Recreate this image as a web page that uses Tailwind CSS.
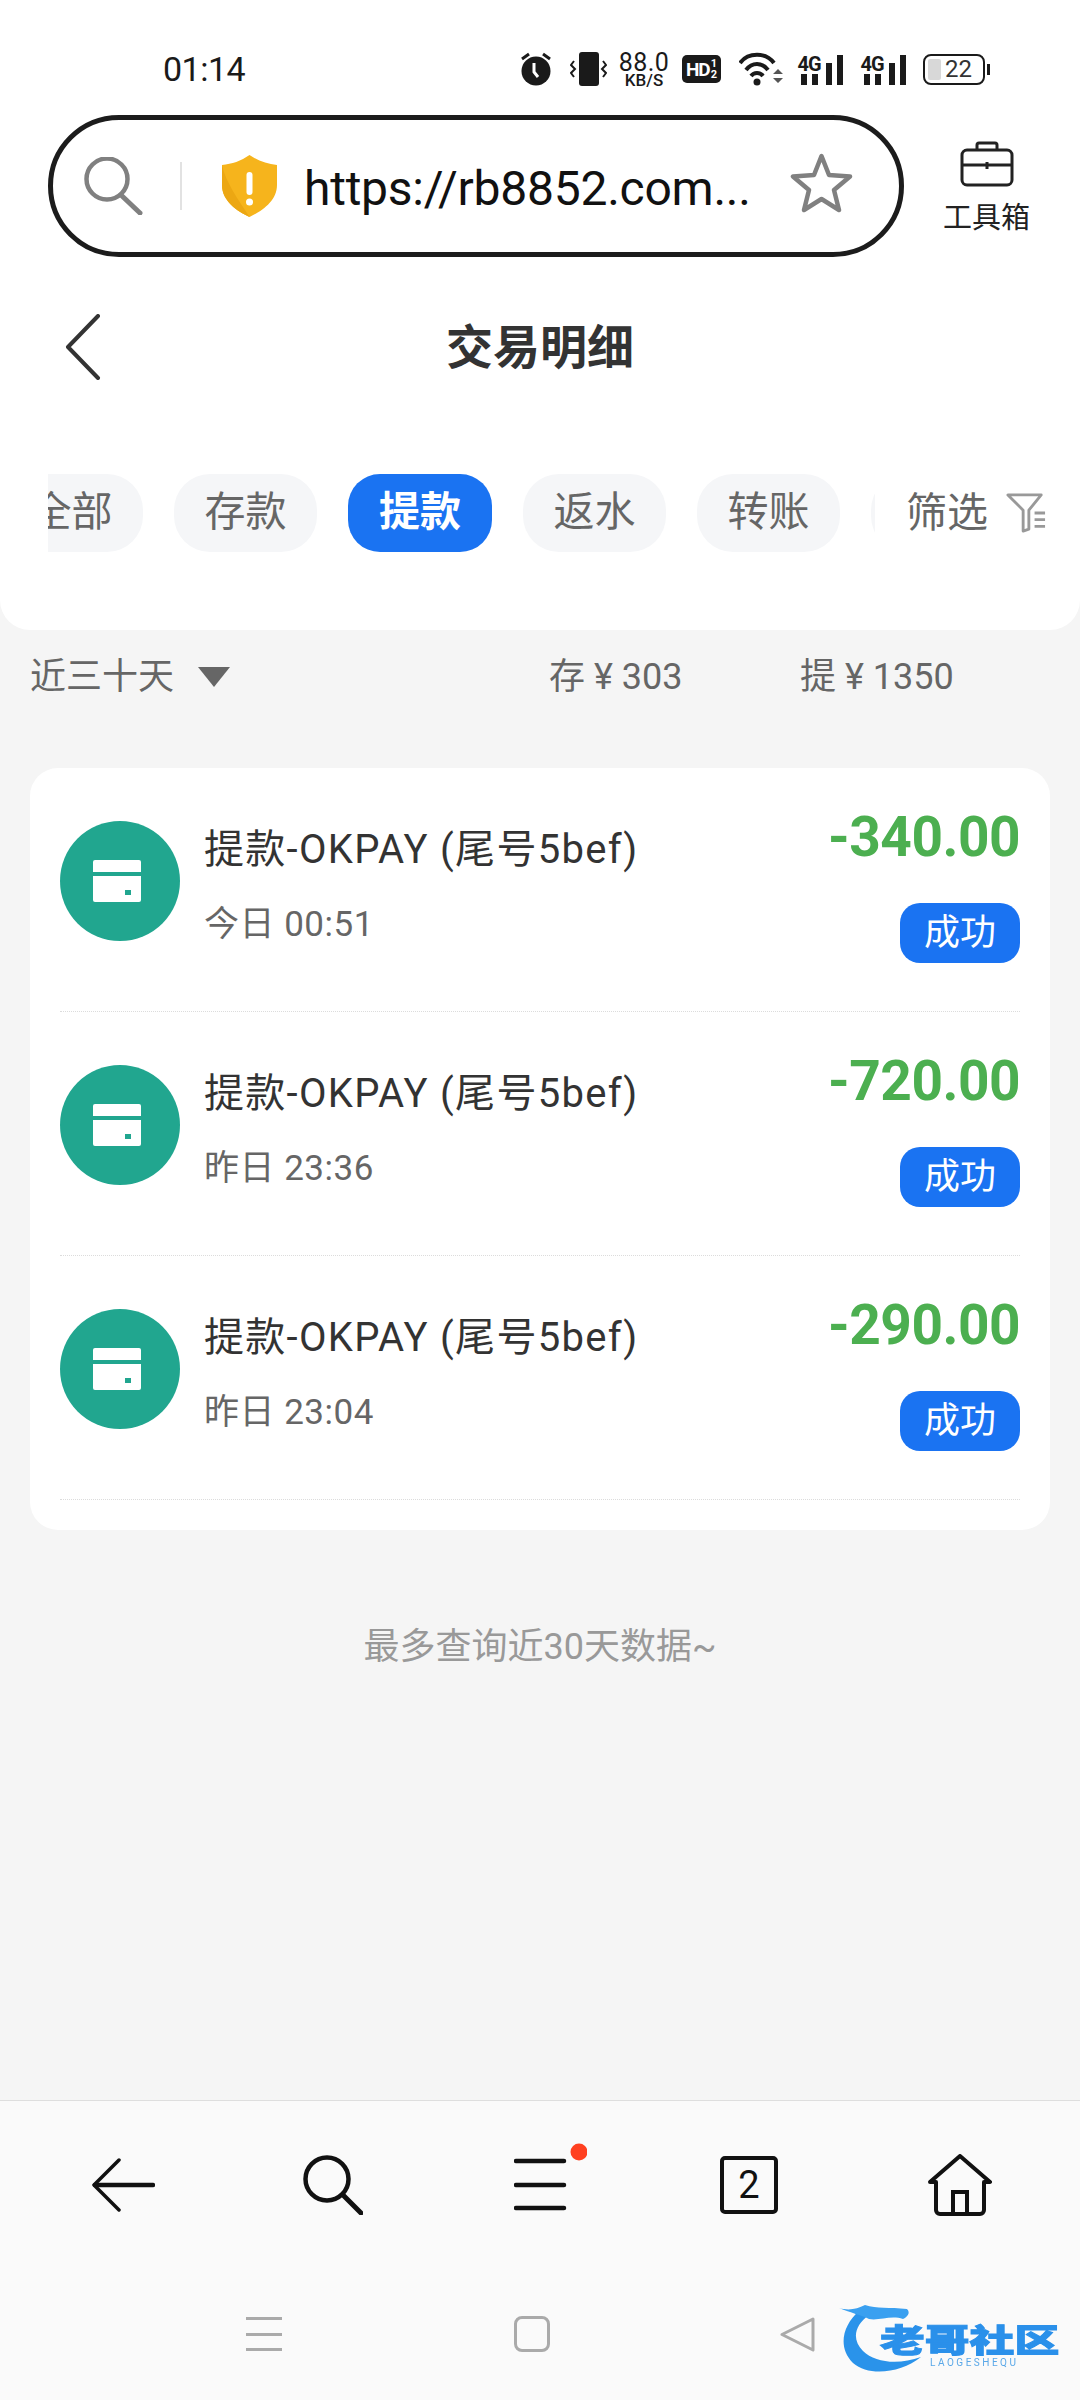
<!DOCTYPE html>
<html lang="zh-CN">
<head>
    <meta charset="UTF-8">
    <meta name="viewport" content="width=device-width, initial-scale=1.0">
    <title>交易明细</title>
    <script src="https://cdn.jsdelivr.net/npm/@tailwindcss/browser@4"></script>
</head>
<body class="bg-[#f5f5f5] font-['Roboto','Noto_Sans_CJK_SC',sans-serif]">
<div class="w-[1080px] h-[2400px] flex flex-col overflow-hidden">

    <!-- header -->
    <header class="bg-white h-[630px] rounded-b-[30px] shrink-0">
        <!-- status bar -->
        <div class="flex items-center h-[38px] mt-[50px] text-[#1a1a1a]">
            <span class="ml-[163px] w-[357px] text-[34px] leading-none tracking-[-0.5px]">01:14</span>
            <svg class="w-[32px] h-[34px]" viewBox="0 0 32 34"><circle cx="16" cy="19" r="14.5" fill="#1a1a1a"/><path d="M2 7 9 2M30 7 23 2" stroke="#1a1a1a" stroke-width="3"/><path d="M14 11v9l4 5" stroke="#fff" stroke-width="3" fill="none"/></svg>
            <svg class="ml-[18px] w-[37px] h-[34px]" viewBox="0 0 37 34"><rect x="9" y="0" width="20" height="34" rx="3" fill="#1a1a1a"/><path d="M4 9 1 13l4 4-4 4 3 4M33 9l3 4-4 4 4 4-3 4" stroke="#1a1a1a" stroke-width="2" fill="none"/></svg>
            <div class="ml-[11px] w-[52px] flex flex-col items-center">
                <span class="text-[25px] leading-[21px] tracking-[0.5px]">88.0</span>
                <span class="text-[17px] leading-[14px] font-medium">KB/S</span>
            </div>
            <div class="ml-[12px] w-[39px] h-[28px] bg-[#1a1a1a] rounded-[5px] flex items-center justify-center text-white font-bold">
                <span class="text-[19px] leading-none tracking-[-1px]">HD</span>
                <span class="ml-[1px] flex flex-col text-[11px] leading-[11px]"><span>1</span><span>2</span></span>
            </div>
            <svg class="ml-[18px] w-[44px] h-[36px]" viewBox="0 0 44 36"><path d="M1 12C9 1 27 1 35 12M7 19C13 11 23 11 29 19M12 25C15 21 21 21 24 25" stroke="#1a1a1a" stroke-width="4" fill="none"/><circle cx="18" cy="31" r="3.5" fill="#1a1a1a"/><path d="M34 23l5-5 5 5zM34 27l5 5 5-5z" fill="#555"/></svg>
            <div class="ml-[14px] flex items-end gap-[5px] h-[32px]">
                <div class="w-[24px] flex flex-col items-center">
                    <span class="text-[20px] leading-[20px] font-bold tracking-[-1px]">4G</span>
                    <div class="flex gap-[5px]"><i class="w-[6px] h-[11px] bg-[#1a1a1a]"></i><i class="w-[6px] h-[11px] bg-[#1a1a1a]"></i></div>
                </div>
                <i class="w-[6px] h-[22px] bg-[#1a1a1a]"></i>
                <i class="w-[6px] h-[30px] bg-[#1a1a1a]"></i>
            </div>
            <div class="ml-[17px] flex items-end gap-[5px] h-[32px]">
                <div class="w-[24px] flex flex-col items-center">
                    <span class="text-[20px] leading-[20px] font-bold tracking-[-1px]">4G</span>
                    <div class="flex gap-[5px]"><i class="w-[6px] h-[11px] bg-[#1a1a1a]"></i><i class="w-[6px] h-[11px] bg-[#1a1a1a]"></i></div>
                </div>
                <i class="w-[6px] h-[22px] bg-[#1a1a1a]"></i>
                <i class="w-[6px] h-[30px] bg-[#1a1a1a]"></i>
            </div>
            <div class="ml-[17px] w-[62px] h-[31px] border-[2px] border-[#1a1a1a] rounded-[8px] flex items-center p-[3px]">
                <i class="w-[13px] h-full bg-[#d8d8d8] rounded-[2px]"></i>
                <span class="ml-[4px] text-[24px] leading-none text-[#333]">22</span>
            </div>
            <i class="ml-[2px] w-[3px] h-[11px] bg-[#1a1a1a]"></i>
        </div>

        <!-- address bar -->
        <div class="flex mt-[27px] ml-[48px]">
            <div class="w-[856px] h-[142px] border-[5px] border-[#1c1c1c] rounded-full flex items-center pl-[31px] pr-[46px]">
                <svg class="w-[59px] h-[58px] shrink-0" viewBox="0 0 59 58"><circle cx="23" cy="22" r="20.5" stroke="#808080" stroke-width="4.5" fill="none"/><path d="M37 38 56 56" stroke="#808080" stroke-width="5" stroke-linecap="round"/></svg>
                <i class="ml-[37px] w-[2px] h-[48px] bg-[#e2e2e2] shrink-0"></i>
                <svg class="ml-[40px] w-[55px] h-[62px] shrink-0" viewBox="0 0 55 62"><path d="M27.5 0C36 6 45 9 55 10V30C55 46 40 56 27.5 62 15 56 0 46 0 30V10C10 9 19 6 27.5 0Z" fill="#f6b41c"/><path d="M27.5 62C15 56 0 46 0 30V10C4 28 16 44 27.5 62Z" fill="#eca713"/><rect x="24.5" y="17" width="6" height="23" rx="3" fill="#fff"/><circle cx="27.5" cy="47" r="3.5" fill="#fff"/></svg>
                <span class="ml-[27px] mt-[5px] text-[48px] leading-none tracking-[-0.25px] text-[#111] whitespace-nowrap">https://rb8852.com...</span>
                <svg class="ml-auto -mt-[6px] w-[63px] h-[60px] shrink-0" viewBox="0 0 63 60"><path d="M31.5 3 39 22 60 23.500 44 37 49 57 31.500 46 14 57 19 37 3 23.500 24 22Z" stroke="#808080" stroke-width="4.500" stroke-linejoin="round" fill="none"/></svg>
            </div>
            <div class="ml-[39px] w-[87px] flex flex-col items-center pt-[26px]">
                <svg class="w-[54px] h-[46px]" viewBox="0 0 54 46"><path d="M17 9V4a2 2 0 0 1 2-2h16a2 2 0 0 1 2 2v5" stroke="#222" stroke-width="3" fill="none"/><rect x="2" y="9" width="50" height="35" rx="5" stroke="#222" stroke-width="3" fill="none"/><path d="M2 24H52M27 21v7" stroke="#222" stroke-width="3"/></svg>
                <span class="mt-[17px] text-[29px] leading-[29px] text-[#222] whitespace-nowrap">工具箱</span>
            </div>
        </div>

        <!-- title -->
        <div class="relative flex items-center justify-center mt-[25px] h-[130px]">
            <svg class="absolute left-[65px] top-[32px] w-[36px] h-[66px]" viewBox="0 0 36 66"><path d="M33 2 3 33 33 64" stroke="#333" stroke-width="4" stroke-linecap="round" stroke-linejoin="round" fill="none"/></svg>
            <h1 class="text-[47px] leading-none font-bold text-[#333]">交易明细</h1>
        </div>

        <!-- tabs -->
        <div class="flex items-center mt-[62px]">
            <div class="ml-[48px] w-[827px] overflow-hidden flex gap-[31px] text-[41px] text-[#666]">
                <div class="-ml-[48px] shrink-0 w-[143px] h-[78px] rounded-[36px] bg-[#f5f6f8] flex items-center justify-center">全部</div>
                <div class="shrink-0 w-[143px] h-[78px] rounded-[36px] bg-[#f5f6f8] flex items-center justify-center">存款</div>
                <div class="shrink-0 w-[144px] h-[78px] rounded-[32px] bg-[#1a73f2] text-white font-bold flex items-center justify-center">提款</div>
                <div class="shrink-0 w-[143px] h-[78px] rounded-[36px] bg-[#f5f6f8] flex items-center justify-center">返水</div>
                <div class="shrink-0 w-[143px] h-[78px] rounded-[36px] bg-[#f5f6f8] flex items-center justify-center">转账</div>
                <div class="shrink-0 w-[143px] h-[78px] rounded-[36px] bg-[#f5f6f8]"></div>
            </div>
            <span class="ml-[31px] text-[41px] leading-none text-[#666]">筛选</span>
            <svg class="ml-[18px] w-[40px] h-[42px]" viewBox="0 0 42 42"><path d="M2 2H37L24 18V38L18 40V18Z" stroke="#999" stroke-width="3" stroke-linejoin="round" fill="none"/><path d="M30 21H41M30 28H41M30 35H41" stroke="#999" stroke-width="3"/></svg>
        </div>
    </header>

    <!-- summary -->
    <div class="flex items-center h-[94px] text-[36px] leading-none text-[#666]">
        <span class="ml-[30px] w-[144px] whitespace-nowrap">近三十天</span>
        <svg class="ml-[24px] w-[32px] h-[20px]" viewBox="0 0 32 20"><path d="M0 0H32L16 20Z" fill="#666"/></svg>
        <span class="ml-[319px] w-[251px] whitespace-nowrap">存 ¥ 303</span>
        <span class="whitespace-nowrap">提 ¥ 1350</span>
    </div>

    <!-- records -->
    <div class="mt-[44px] mx-[30px] bg-white rounded-[28px] px-[30px] pb-[30px]">
        <div class="flex h-[244px] border-b border-dotted border-[#dcdcdc]">
            <div class="mt-[53px] w-[120px] h-[120px] rounded-full bg-[#21a68f] flex flex-col items-center justify-center shrink-0 pr-[6px]">
                <i class="w-[48px] h-[12px] bg-white rounded-t-[2px]"></i>
                <div class="mt-[4px] w-[48px] h-[26px] bg-white rounded-b-[2px] flex justify-end items-end pr-[10px] pb-[7px]"><i class="w-[6px] h-[5px] bg-[#21a68f]"></i></div>
            </div>
            <div class="ml-[24px] mt-[59px]">
                <p class="text-[40px] leading-[46px] tracking-[1.3px] text-[#333] whitespace-nowrap">提款-OKPAY (尾号5bef)</p>
                <p class="mt-[32px] text-[35px] leading-[40px] tracking-[0.5px] text-[#666] whitespace-nowrap">今日 00:51</p>
            </div>
            <div class="ml-auto flex flex-col items-end mt-[38px]">
                <p class="text-[55px] leading-[62px] font-bold tracking-[-0.5px] text-[#4caf50]">-340.00</p>
                <span class="mt-[35px] w-[120px] h-[60px] rounded-[20px] bg-[#1a73f2] text-white text-[36px] flex items-center justify-center">成功</span>
            </div>
        </div>
        <div class="flex h-[244px] border-b border-dotted border-[#dcdcdc]">
            <div class="mt-[53px] w-[120px] h-[120px] rounded-full bg-[#21a68f] flex flex-col items-center justify-center shrink-0 pr-[6px]">
                <i class="w-[48px] h-[12px] bg-white rounded-t-[2px]"></i>
                <div class="mt-[4px] w-[48px] h-[26px] bg-white rounded-b-[2px] flex justify-end items-end pr-[10px] pb-[7px]"><i class="w-[6px] h-[5px] bg-[#21a68f]"></i></div>
            </div>
            <div class="ml-[24px] mt-[59px]">
                <p class="text-[40px] leading-[46px] tracking-[1.3px] text-[#333] whitespace-nowrap">提款-OKPAY (尾号5bef)</p>
                <p class="mt-[32px] text-[35px] leading-[40px] tracking-[0.5px] text-[#666] whitespace-nowrap">昨日 23:36</p>
            </div>
            <div class="ml-auto flex flex-col items-end mt-[38px]">
                <p class="text-[55px] leading-[62px] font-bold tracking-[-0.5px] text-[#4caf50]">-720.00</p>
                <span class="mt-[35px] w-[120px] h-[60px] rounded-[20px] bg-[#1a73f2] text-white text-[36px] flex items-center justify-center">成功</span>
            </div>
        </div>
        <div class="flex h-[244px] border-b border-dotted border-[#dcdcdc]">
            <div class="mt-[53px] w-[120px] h-[120px] rounded-full bg-[#21a68f] flex flex-col items-center justify-center shrink-0 pr-[6px]">
                <i class="w-[48px] h-[12px] bg-white rounded-t-[2px]"></i>
                <div class="mt-[4px] w-[48px] h-[26px] bg-white rounded-b-[2px] flex justify-end items-end pr-[10px] pb-[7px]"><i class="w-[6px] h-[5px] bg-[#21a68f]"></i></div>
            </div>
            <div class="ml-[24px] mt-[59px]">
                <p class="text-[40px] leading-[46px] tracking-[1.3px] text-[#333] whitespace-nowrap">提款-OKPAY (尾号5bef)</p>
                <p class="mt-[32px] text-[35px] leading-[40px] tracking-[0.5px] text-[#666] whitespace-nowrap">昨日 23:04</p>
            </div>
            <div class="ml-auto flex flex-col items-end mt-[38px]">
                <p class="text-[55px] leading-[62px] font-bold tracking-[-0.5px] text-[#4caf50]">-290.00</p>
                <span class="mt-[35px] w-[120px] h-[60px] rounded-[20px] bg-[#1a73f2] text-white text-[36px] flex items-center justify-center">成功</span>
            </div>
        </div>
    </div>

    <p class="mt-[96px] text-center text-[36px] leading-[42px] text-[#999]">最多查询近30天数据~</p>

    <!-- browser toolbar and system nav -->
    <footer class="relative mt-auto h-[300px] bg-[#fafafa] border-t border-[#dedede]">
        <div class="flex items-center h-[84px] mt-[42px]">
            <svg class="ml-[92px] w-[63px] h-[54px]" viewBox="0 0 63 54"><path d="M27 2 2 27 27 52" stroke="#111" stroke-width="3.500" stroke-linecap="round" stroke-linejoin="round" fill="none"/><path d="M3 27H61" stroke="#111" stroke-width="4.500" stroke-linecap="round"/></svg>
            <svg class="ml-[148px] w-[60px] h-[60px]" viewBox="0 0 60 60"><circle cx="24" cy="24" r="21.500" stroke="#111" stroke-width="4.500" fill="none"/><path d="M40 40 58 58" stroke="#111" stroke-width="5" stroke-linecap="round"/></svg>
            <svg class="ml-[151px] w-[73px] h-[84px]" viewBox="0 0 73 84"><path d="M2 18H50M2 42H50M2 65H50" stroke="#111" stroke-width="4.500" stroke-linecap="round"/><circle cx="65" cy="9" r="8.500" fill="#ff4020"/></svg>
            <div class="ml-[133px] w-[58px] h-[58px] border-[4px] border-[#111] rounded-[5px] flex items-center justify-center text-[38px] leading-none text-[#111]">2</div>
            <svg class="ml-[150px] w-[64px] h-[62px]" viewBox="0 0 64 62"><path d="M2 28 32 2 62 28H56V56a4 4 0 0 1-4 4H12a4 4 0 0 1-4-4V28Z" stroke="#111" stroke-width="4" stroke-linejoin="round" fill="none"/><path d="M25 60V38H39V60" stroke="#111" stroke-width="4" fill="none"/></svg>
        </div>
        <div class="flex items-center h-[36px] mt-[89px]">
            <div class="ml-[246px] w-[36px] h-[34px] flex flex-col justify-between">
                <i class="h-[3px] bg-[#aaa]"></i><i class="h-[3px] bg-[#aaa]"></i><i class="h-[3px] bg-[#aaa]"></i>
            </div>
            <div class="ml-[232px] w-[36px] h-[36px] border-[3px] border-[#aaa] rounded-[8px]"></div>
            <svg class="ml-[230px] w-[36px] h-[35px]" viewBox="0 0 36 35"><path d="M33 2 2 17.500 33 33Z" stroke="#aaa" stroke-width="3" stroke-linejoin="round" fill="none"/></svg>
        </div>
        <!-- watermark -->
        <div class="absolute left-[839px] top-[200px] w-[222px] h-[74px] blur-[0.5px]">
            <svg class="absolute inset-0 w-[222px] h-[74px]" viewBox="0 0 222 74"><path d="M20 10C4 24-2 46 14 62 30 76 62 72 82 56 60 64 36 62 24 50 12 38 16 24 30 14Z" fill="#2a93ea"/><path d="M0 7C10 10 18 8 26 4 38 8 50 6 68 8 72 12 68 16 64 18 52 14 40 20 30 18 22 14 12 12 0 7Z" fill="#3aa0f0"/></svg>
            <span class="absolute left-[41px] top-[22px] origin-left scale-x-[1.4] text-[32px] leading-[36px] font-black text-[#2a90ea] [-webkit-text-stroke:1px_#2a90ea] whitespace-nowrap">老哥社区</span>
            <span class="absolute left-[91px] top-[56px] text-[10px] leading-[12px] tracking-[2.5px] text-[#5aa8e8] whitespace-nowrap">LAOGESHEQU</span>
        </div>
    </footer>
</div>
</body>
</html>
